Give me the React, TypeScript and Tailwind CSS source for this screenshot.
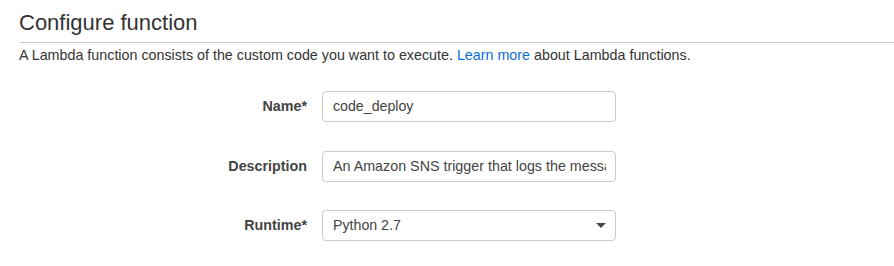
import React from "react";

export default function App() {
  return (
    <div className="w-[894px] h-[266px] bg-white overflow-hidden text-[#333]" style={{ fontFamily: '"Liberation Sans", Arial, sans-serif' }}>
      <div className="pl-[19px]">
        <div className="pt-[11px] pb-[7px] border-b border-[#cccccc] text-[22px] leading-[24px] text-[#333]">
          Configure function
        </div>
        <p className="mt-[4px] text-[14.3px] leading-[17px] text-[#333]">
          A Lambda function consists of the custom code you want to execute.{" "}
          <a className="text-[#0b6fcf]">Learn more</a> about Lambda functions.
        </p>
      </div>
      <div className="mt-[27px] flex flex-col">
        <div className="flex items-center h-[31px]">
          <label className="w-[307px] text-right text-[14.3px] font-bold text-[#444]">Name*</label>
          <div className="ml-[15px] w-[294px] h-[31px] border border-[#cccccc] rounded-[4px] px-[10px] flex items-center text-[14.2px] text-[#444] overflow-hidden whitespace-nowrap">
            code_deploy
          </div>
        </div>
        <div className="flex items-center h-[31px] mt-[29px]">
          <label className="w-[307px] text-right text-[14.3px] font-bold text-[#444]">Description</label>
          <div className="ml-[15px] w-[294px] h-[31px] border border-[#cccccc] rounded-[4px] pl-[10px] pr-[0px] flex items-center text-[14.3px] text-[#444] overflow-hidden whitespace-nowrap">
            <span className="overflow-hidden whitespace-nowrap w-[273px] block">An Amazon SNS trigger that logs the message pushed to the SNS topic.</span>
          </div>
        </div>
        <div className="flex items-center h-[31px] mt-[28px]">
          <label className="w-[307px] text-right text-[14.3px] font-bold text-[#444]">Runtime*</label>
          <div className="ml-[15px] w-[294px] h-[31px] border border-[#cccccc] rounded-[4px] pl-[10px] pr-[9px] flex items-center justify-between text-[14.2px] text-[#444]">
            <span>Python 2.7</span>
            <svg width="10" height="5" viewBox="0 0 10 5"><path d="M0 0 L10 0 L5 5 Z" fill="#444" /></svg>
          </div>
        </div>
      </div>
    </div>
  );
}
